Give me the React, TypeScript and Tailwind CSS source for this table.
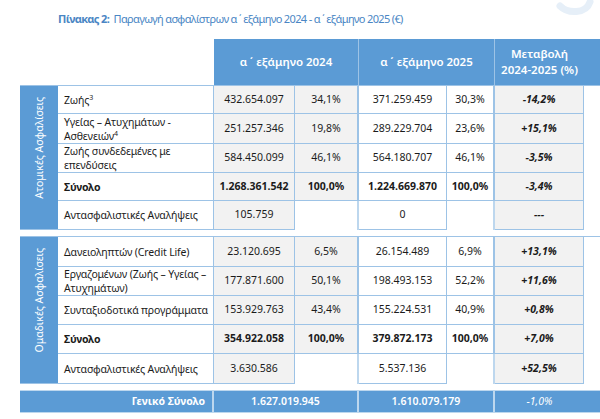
import { FunctionComponent, ReactNode } from "react";

type RowType = {
  label: ReactNode;
  v24: string;
  p24?: string;
  v25: string;
  p25?: string;
  ch: string;
  bold?: boolean;
  h?: string;
};

const Row: FunctionComponent<RowType> = ({ label, v24, p24, v25, p25, ch, bold, h = "h-[29px]" }) => {
  const wt = bold ? "font-bold" : "";
  return (
    <div className={`grid grid-cols-[156px_81px_64px_88px_48px_89px] ${h} text-[10.5px]`}>
      <div
        className={`flex items-center px-[6px] leading-[14px] whitespace-nowrap tracking-[-0.15px] bg-white border-b border-r border-[#9dc3e6] ${wt}`}
      >
        {label}
      </div>
      <div className={`flex items-center justify-center bg-[#f2f2f2] border-b border-r border-[#9dc3e6] ${wt}`}>{v24}</div>
      <div
        className={`flex items-center justify-center border-r-2 ${p24 ? "bg-[#f2f2f2] border-b border-[#9dc3e6]" : "bg-white border-[#bdd7ee]"} ${wt}`}
      >
        {p24}
      </div>
      <div className={`flex items-center justify-center bg-white border-b border-r border-[#9dc3e6] ${wt}`}>{v25}</div>
      <div
        className={`flex items-center justify-center bg-white border-r-2 ${p25 ? "border-b border-[#9dc3e6]" : "border-[#bdd7ee]"} ${wt}`}
      >
        {p25}
      </div>
      <div className="flex items-center justify-center bg-[#f2f2f2] border-b border-r border-[#9dc3e6] font-bold italic">
        {ch}
      </div>
    </div>
  );
};

const Section: FunctionComponent<{ title: string; children: ReactNode }> = ({ title, children }) => (
  <div className="flex ml-[20px] border-t border-[#9dc3e6]">
    <div className="w-[38px] bg-[#5b9bd5] flex items-start justify-center pt-[11px] border-b border-[#9dc3e6]">
      <span className="[writing-mode:vertical-rl] rotate-180 text-white text-[10.5px] leading-none whitespace-nowrap">
        {title}
      </span>
    </div>
    <div className="flex flex-col">{children}</div>
  </div>
);

const Sup: FunctionComponent<{ n: string }> = ({ n }) => <sup className="text-[7px]">{n}</sup>;

export default function App() {
  return (
    <div className="w-[600px] h-[419px] bg-white relative overflow-hidden font-['Noto_Sans',sans-serif] text-[#1b1b1b]">
      <svg className="absolute right-[4px] top-0" width="40" height="16" viewBox="0 0 40 16">
        <path d="M4 6 C 12 14, 30 14, 34 2" stroke="#e6eff8" strokeWidth="7" fill="none" strokeLinecap="round" />
      </svg>

      <div className="pt-[10px] pl-[58px] text-[11px] tracking-[-0.65px] text-[#4a86c4] leading-[18px] whitespace-nowrap">
        <span className="font-bold">Πίνακας 2:</span>&nbsp; Παραγωγή ασφαλίστρων α ΄ εξάμηνο 2024 - α ΄ εξάμηνο 2025 (€)
      </div>

      <div className="mt-[11px] ml-[214px] grid grid-cols-[145px_136px_89px] h-[46px] bg-[#5b9bd5] text-white text-[11.5px] font-semibold">
        <div className="flex items-center justify-center border-r border-[#9dc3e6]">α ΄ εξάμηνο 2024</div>
        <div className="flex items-center justify-center border-r border-[#9dc3e6]">α ΄ εξάμηνο 2025</div>
        <div className="flex flex-col items-center justify-center leading-[16px] text-center">
          <span>Μεταβολή</span>
          <span>2024-2025 (%)</span>
        </div>
      </div>

      <Section title="Ατομικές Ασφαλίσεις">
        <Row label={<span>Ζωής<Sup n="3" /></span>} v24="432.654.097" p24="34,1%" v25="371.259.459" p25="30,3%" ch="-14,2%" h="h-[28px]" />
        <Row
          label={
            <span>
              Υγείας – Ατυχημάτων -<br />
              Ασθενειών<Sup n="4" />
            </span>
          }
          v24="251.257.346"
          p24="19,8%"
          v25="289.229.704"
          p25="23,6%"
          ch="+15,1%"
          h="h-[30px]"
        />
        <Row
          label={
            <span>
              Ζωής συνδεδεμένες με
              <br />
              επενδύσεις
            </span>
          }
          v24="584.450.099"
          p24="46,1%"
          v25="564.180.707"
          p25="46,1%"
          ch="-3,5%"
        />
        <Row label="Σύνολο" v24="1.268.361.542" p24="100,0%" v25="1.224.669.870" p25="100,0%" ch="-3,4%" bold h="h-[28px]" />
        <Row label="Αντασφαλιστικές Αναλήψεις" v24="105.759" v25="0" ch="---" />
      </Section>

      <div className="h-[6px]" />

      <Section title="Ομαδικές Ασφαλίσεις">
        <Row label="Δανειοληπτών (Credit Life)" v24="23.120.695" p24="6,5%" v25="26.154.489" p25="6,9%" ch="+13,1%" h="h-[30px]" />
        <Row
          label={
            <span>
              Εργαζομένων (Ζωής – Υγείας –<br />
              Ατυχημάτων)
            </span>
          }
          v24="177.871.600"
          p24="50,1%"
          v25="198.493.153"
          p25="52,2%"
          ch="+11,6%"
        />
        <Row label="Συνταξιοδοτικά προγράμματα" v24="153.929.763" p24="43,4%" v25="155.224.531" p25="40,9%" ch="+0,8%" />
        <Row label="Σύνολο" v24="354.922.058" p24="100,0%" v25="379.872.173" p25="100,0%" ch="+7,0%" bold />
        <Row label="Αντασφαλιστικές Αναλήψεις" v24="3.630.586" v25="5.537.136" ch="+52,5%" h="h-[30px]" />
      </Section>

      <div className="mt-[6px] ml-[20px] grid grid-cols-[194px_145px_136px_89px] h-[23px] bg-[#5b9bd5] text-white text-[10.5px] border-y border-[#bdd7ee]">
        <div className="flex items-center justify-end pr-[7px] font-bold border-r-2 border-[#bdd7ee]">Γενικό Σύνολο</div>
        <div className="flex items-center justify-center font-semibold border-r-2 border-[#bdd7ee]">1.627.019.945</div>
        <div className="flex items-center justify-center font-semibold border-r-2 border-[#bdd7ee]">1.610.079.179</div>
        <div className="flex items-center justify-center italic">-1,0%</div>
      </div>
    </div>
  );
}
